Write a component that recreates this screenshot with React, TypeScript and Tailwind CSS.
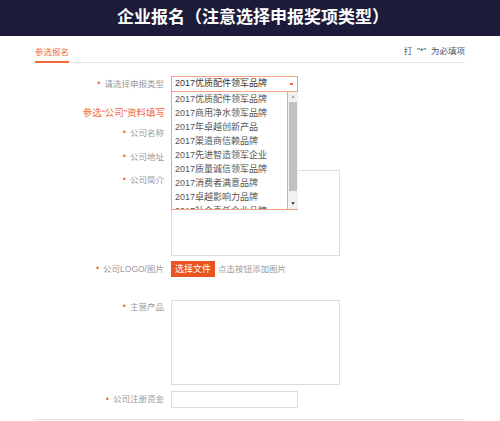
import React from "react";

const awards = [
  "2017优质配件领军品牌",
  "2017商用净水领军品牌",
  "2017年卓越创新产品",
  "2017渠道商信赖品牌",
  "2017先进智造领军企业",
  "2017质量诚信领军品牌",
  "2017消费者满意品牌",
  "2017卓越影响力品牌",
  "2017社会责任企业品牌",
];

const Label = ({ text, h, required = true }: { text: string; h: string; required?: boolean }) => (
  <div className={`w-[130px] shrink-0 flex justify-end items-center pr-[1px] text-[8.5px] text-[#9a9a9a] ${h}`}>
    {required && <span className="text-[#f26a3a] mr-[4px] text-[9px]">•</span>}
    {text}
  </div>
);

const App: React.FC = () => {
  return (
    <div
      className="w-[500px] h-[421px] bg-white overflow-hidden"
      style={{ fontFamily: '"Liberation Sans", "Noto Sans CJK SC", sans-serif' }}
    >
      <header className="h-[36px] bg-[#1c1c3a] flex items-center justify-center text-white text-[17px] font-bold pl-[6px]">
        企业报名（注意选择申报奖项类型）
      </header>

      <div className="px-[35px]">
        <div className="h-[27px] flex justify-between items-end border-b border-[#e3e3e3]">
          <span className="-mb-px border-b-2 border-[#f26a3a] text-[#f26a3a] text-[8.5px] leading-[16px] pb-[1px]">
            参选报名
          </span>
          <span className="text-[8.5px] text-[#555] leading-[16px] pb-[3px]">打 &nbsp;"*" &nbsp;为必填项</span>
        </div>

        {/* 申报类型 */}
        <div className="flex gap-[6px] mt-[13px]">
          <Label text="请选择申报类型" h="h-[16px]" />
          <div className="relative">
            <div className="w-[127px] h-[16px] border border-[#f5a27e] flex items-center justify-between pl-[3px] pr-[4px] text-[9px] text-[#333]">
              <span>2017优质配件领军品牌</span>
              <span className="w-[3px] h-[2px] bg-[#f26a3a]" />
            </div>
            <div className="absolute left-0 top-[16px] z-10 w-[127px] h-[118px] bg-white border-l border-b border-[#f5a27e] flex">
              <ul className="w-[116px] h-full overflow-hidden border-r border-[#f5a27e] text-[9px] text-[#555] pl-[3px]">
                {awards.map((a) => (
                  <li key={a} className="h-[14px] leading-[14px] whitespace-nowrap">
                    {a}
                  </li>
                ))}
              </ul>
              <div className="w-[10px] h-full bg-[#f1f1f1] flex flex-col items-center">
                <div className="h-[10px] flex items-center text-[5px] text-[#a0a0a0]">▲</div>
                <div className="w-[8px] h-[89px] bg-[#c1c1c1]" />
                <div className="flex-1" />
                <div className="h-[10px] flex items-center text-[5px] text-[#222]">▼</div>
              </div>
            </div>
          </div>
        </div>

        {/* 资料填写 */}
        <div className="flex gap-[6px] mt-[14px]">
          <div className="w-[130px] h-[14px] flex items-center justify-end text-[9.5px] text-[#f26a3a]">
            参选“公司”资料填写
          </div>
        </div>

        <div className="flex gap-[6px] mt-[4px]">
          <Label text="公司名称" h="h-[18px]" />
          <input className="w-[127px] h-[18px] border border-[#dcdcdc] outline-none" />
        </div>

        <div className="flex gap-[6px] mt-[6px]">
          <Label text="公司地址" h="h-[18px]" />
          <input className="w-[127px] h-[18px] border border-[#dcdcdc] outline-none" />
        </div>

        <div className="flex gap-[6px] mt-[4px] items-start">
          <Label text="公司简介" h="h-[20px]" />
          <textarea className="w-[169px] h-[86px] border border-[#dcdcdc] outline-none resize-none" />
        </div>

        <div className="flex gap-[6px] mt-[5px] items-center">
          <Label text="公司LOGO/图片" h="h-[16px]" />
          <button className="h-[16px] px-[4px] bg-[#e9541f] text-white text-[9px] leading-[16px]">选择文件</button>
          <span className="text-[8.5px] text-[#9a9a9a] -ml-[3px]">点击按钮添加图片</span>
        </div>

        <div className="flex gap-[6px] mt-[23px] items-start">
          <Label text="主营产品" h="h-[14px]" />
          <textarea className="w-[169px] h-[85px] border border-[#dcdcdc] outline-none resize-none" />
        </div>

        <div className="flex gap-[6px] mt-[6px]">
          <Label text="公司注册资金" h="h-[17px]" />
          <input className="w-[127px] h-[17px] border border-[#dcdcdc] outline-none" />
        </div>

        <div className="mt-[11px] border-t border-[#e3e3e3]" />
      </div>
    </div>
  );
};

export default App;
